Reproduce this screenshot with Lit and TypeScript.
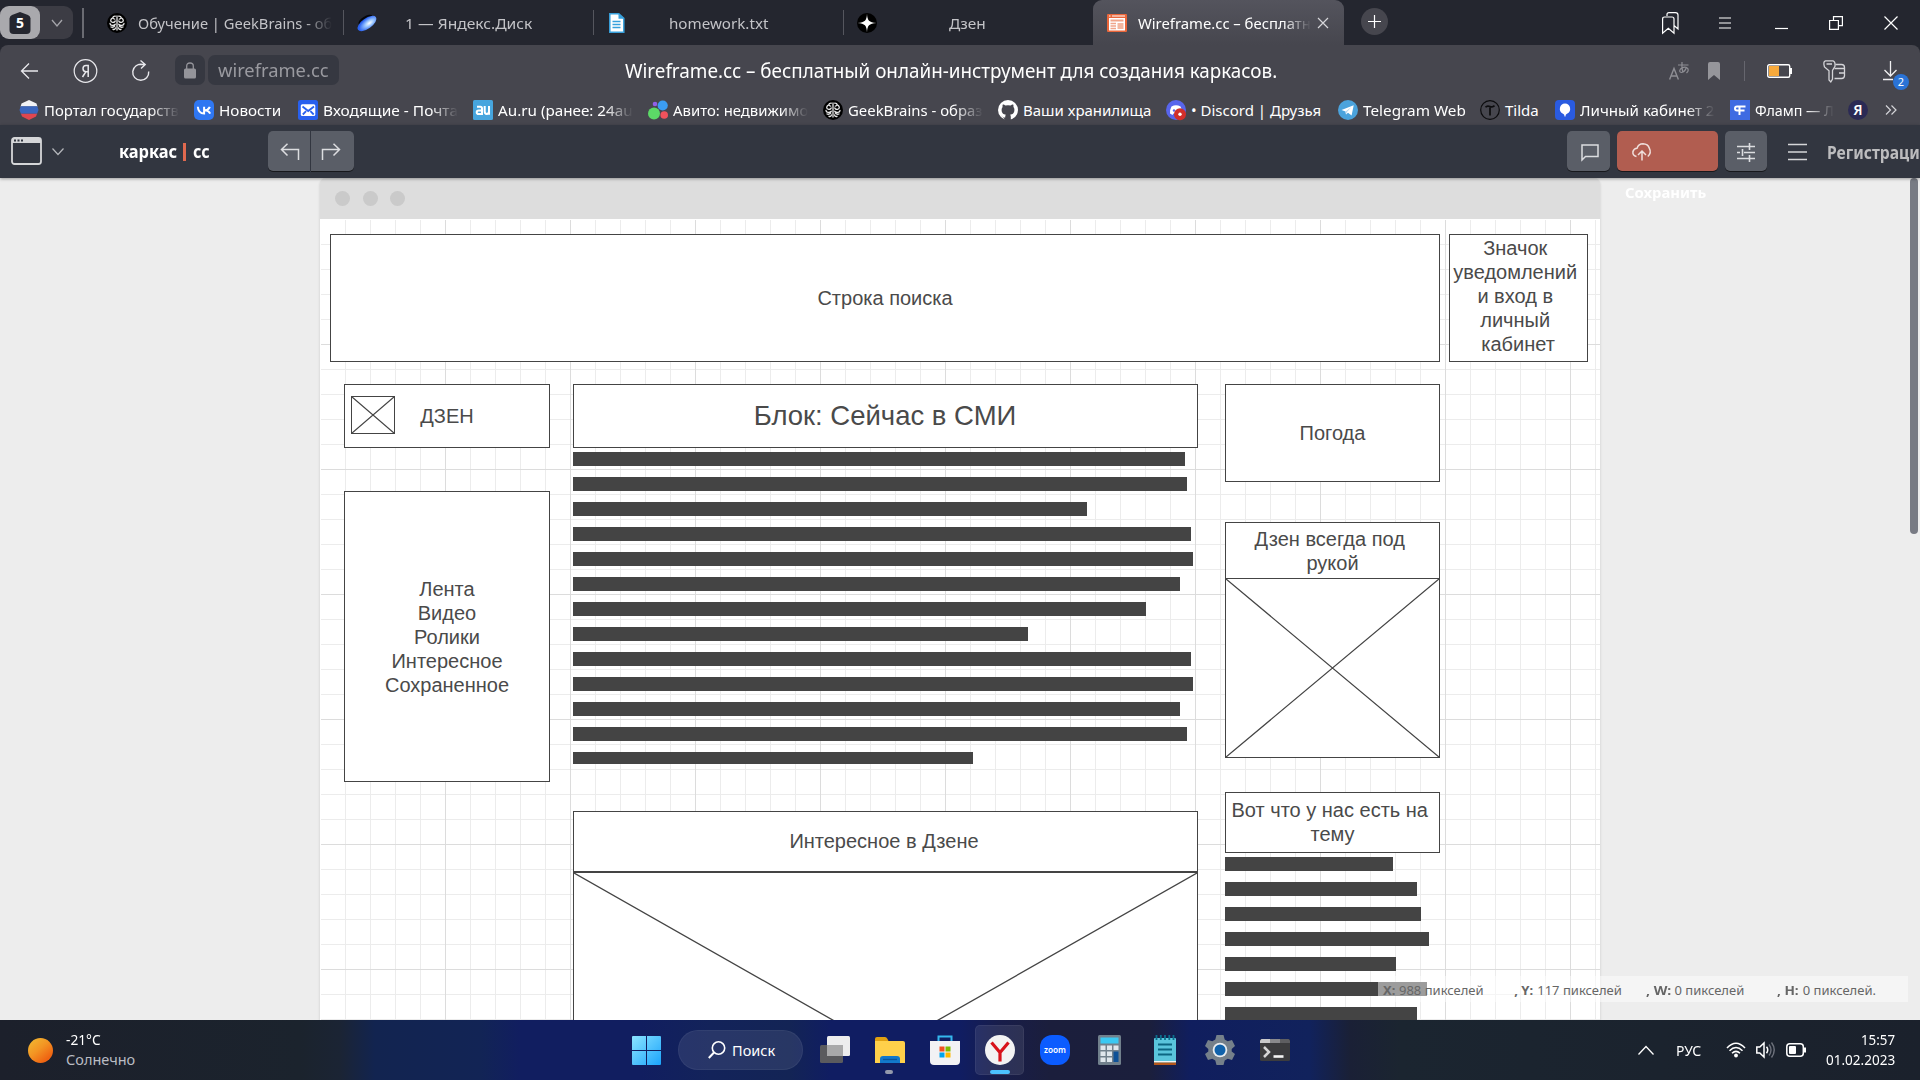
import { LitElement, html, svg, css, TemplateResult } from "lit";
import { customElement, property, query } from "lit/decorators.js";
import { styleMap } from "lit/directives/style-map.js";

/** A single line of text condensed or stretched to an exact width. */
@customElement("fit-text")
class FitText extends LitElement {
  @property() text = "";
  @property({ type: Number }) w = 0;
  @property({ type: Boolean, reflect: true }) fade = false;
  @query(".in") inner!: HTMLElement;
  static styles = css`
    :host { display: block; flex: none; white-space: pre; overflow: visible; }
    :host([fade]) { -webkit-mask-image: linear-gradient(90deg, #000 calc(100% - 28px), transparent); mask-image: linear-gradient(90deg, #000 calc(100% - 28px), transparent); }
    .in { display: inline-block; transform-origin: 0 50%; }
  `;
  render() { return html`<span class="in">${this.text}</span>`; }
  updated() {
    this.style.width = this.w + "px";
    const n = this.inner.offsetWidth;
    if (n) this.inner.style.transform = `scaleX(${this.w / n})`;
  }
}

const fit = (text: string, w: number, fade = false) => html`<fit-text .text=${text} .w=${w} ?fade=${fade}></fit-text>`;
const icon = (w: number, h: number, body: unknown) => html`<svg class="ic" width=${w} height=${h} viewBox="0 0 ${w} ${h}" fill="none">${body}</svg>`;

const brain = svg`<circle cx="10" cy="10" r="10" fill="#000"/><g stroke="#e8e8e8" stroke-width="1.3" stroke-linecap="round"><path d="M10 3v14M8.3 3.2C5 3 5.600 6 7.700 6.200M6 4.600C3 6 3 9 5.500 9.300c2 .2 2.700-.8 2.700-1.500M3 10.500c0 2 3.500 2.500 5.300 .8M4 14c1.500 .6 3-.2 3.800-1M6 16.300c1.300 .6 2.400-.3 2.400-1.500M11.700 3.200C15 3 14.400 6 12.300 6.200M14 4.600c3 1.400 3 4.400 .5 4.700c-2 .2-2.700-.8-2.700-1.500M17 10.500c0 2-3.500 2.500-5.300 .8M16 14c-1.500 .6-3-.2-3.800-1M14 16.300c-1.300 .6-2.400-.3-2.400-1.500"/></g>`;

const I: Record<string, TemplateResult> = {
  brain: icon(20, 20, brain),
  disk: icon(20, 20, svg`<defs><radialGradient id="dg" cx=".6" cy=".6" r=".55"><stop offset="0" stop-color="#fff"/><stop offset=".4" stop-color="#9cc8ff"/><stop offset="1" stop-color="#2a62f0"/></radialGradient></defs><ellipse cx="8.500" cy="7" rx="8" ry="3.600" transform="rotate(-32 8.500 7)" fill="#05060a"/><ellipse cx="10" cy="10.500" rx="11" ry="5.200" transform="rotate(-35 10 10.500)" fill="url(#dg)"/>`),
  doc: icon(20, 20, svg`<path d="M2.800 .8h9l5 4.600v13.800h-14z" fill="#fff" stroke="#37a0dc" stroke-width="1.500"/><path d="M11.500 .8v5h5.300z" fill="#37a0dc"/><path d="M5.500 8.500h8M5.500 11.500h8M5.500 14.500h8" stroke="#37a0dc" stroke-width="1.400"/>`),
  zen: icon(20, 20, svg`<circle cx="10" cy="10" r="10" fill="#000"/><path d="M10 .5C10.300 7.500 12 9.500 19.500 10C12 10.500 10.300 12.500 10 19.500C9.700 12.500 8 10.500 .5 10C8 9.500 9.700 7.500 10 .5z" fill="#fff"/>`),
  wire: icon(20, 20, svg`<rect y="1" width="20" height="18" rx="1" fill="#e9663a"/><path d="M2 3h1.500M5 3h13" stroke="#fff" stroke-width="1"/><rect x="2" y="5" width="16" height="12.500" fill="#fff"/><path d="M3.500 7.500h13" stroke="#f0a58a" stroke-width="2"/><path d="M3.500 10.500h5.500M3.500 13h5.500M3.500 15.500h5.500" stroke="#f0a58a" stroke-width="1.300"/><rect x="10.500" y="10" width="6" height="6" fill="#f3b7a0"/>`),
  flag: icon(20, 20, svg`<defs><clipPath id="fc"><path d="M10 0l7.500 3.600L19.500 10 17 16.500 10 20 3 16.500 .5 10 2.500 3.600z"/></clipPath></defs><g clip-path="url(#fc)"><path d="M0 0h20v6.500H0z" fill="#f2f2f5"/><path d="M0 6.300h20v7.500H0z" fill="#3b66bd"/><path d="M0 13.700h20V20H0z" fill="#e0464f"/></g>`),
  vk: icon(20, 20, svg`<rect width="20" height="20" rx="5" fill="#2f77f2"/><path d="M3.800 6.800c.3 4 2.600 6.700 6.300 6.700V6.800M15.800 6.800c-.7 1.800-2.400 3.300-5.300 3.400c3 .2 4.900 1.400 5.600 3.400" stroke="#fff" stroke-width="2"/>`),
  mail: icon(20, 20, svg`<rect width="20" height="20" rx="2.500" fill="#2860ee"/><rect x="2.800" y="4.300" width="14.500" height="11.700" rx="1.500" fill="#fff"/><path d="M4.500 6.500l5.700 4.500L16 6.500M4.800 14.500l3.300-3.300M15.700 14.500l-3.300-3.300" stroke="#2860ee" stroke-width="1.800"/>`),
  au: icon(20, 20, svg`<rect width="20" height="20" rx="1.500" fill="#46a5de"/><path d="M4 6.700h3.300q1.700 0 1.700 1.700V14H5.700q-2 0-2-1.800t2-1.800H9M11.700 6v5.500q0 2.400 2.100 2.400T16 11.500V6M16 6v8.700" stroke="#fff" stroke-width="2"/>`),
  avito: icon(20, 20, svg`<circle cx="14.700" cy="5.500" r="5.100" fill="#3b9df2"/><circle cx="7" cy="4" r="2.300" fill="#9160e8"/><circle cx="6" cy="13.500" r="6" fill="#5cd967"/><circle cx="16.200" cy="15" r="3.800" fill="#f0525c"/>`),
  github: icon(20, 20, svg`<circle cx="10" cy="10" r="10" fill="#fff"/><path d="M7.200 20v-2.600c-2.600.5-3.300-1.300-3.900-2.200M12.800 20v-3.200c0-1-.3-1.600-.7-2 2.400-.3 4.300-1.400 4.300-5 0-1.200-.4-2-1-2.700.2-.8.200-1.700-.2-2.600-1 0-2 .6-2.700 1.100a9 9 0 0 0-5 0C6.800 5.100 5.800 4.500 4.800 4.500c-.4.900-.4 1.800-.2 2.600-.6.7-1 1.500-1 2.700 0 3.600 1.900 4.700 4.300 5-.4.400-.7 1-.7 2V20z" fill="#46464e"/>`),
  discord: icon(20, 20, svg`<circle cx="10" cy="10" r="10" fill="#5865ec"/><path d="M5.500 6.500Q10 4 14.500 6.500 16.500 10 16 13.500L13.500 15 12.500 13.500H7.500L6.500 15 4 13.500Q3.500 10 5.500 6.500z" fill="#fff"/><circle cx="8" cy="10.500" r="1.200" fill="#5865ec"/><circle cx="14" cy="14.300" r="6" fill="#d12f2b"/><circle cx="14" cy="14.300" r="1.700" fill="#fff"/>`),
  telegram: icon(20, 20, svg`<circle cx="10" cy="10" r="10" fill="#4ba3dc"/><path d="M3.500 10L15.700 5.200 13.600 15.500 10 12.800 8 14.600 7.500 11.500z" fill="#fff"/><path d="M7.500 11.500l6-4.500-4.500 5L8 14.600z" fill="#b9d8ee"/>`),
  tilda: icon(20, 20, svg`<circle cx="10" cy="10" r="9.300" stroke="#0c0c0e" stroke-width="1.200"/><path d="M5.500 7.300c1.500-2 3-1.400 4.500-.8s3 .8 4.500-.8M10 7.500v8" stroke="#0c0c0e" stroke-width="1.700"/>`),
  gis: icon(20, 20, svg`<rect width="20" height="20" rx="4" fill="#2a5be0"/><path d="M10 3.500a5.400 5.400 0 0 0-2 10.300c1.200.5 1.400 1.200 1.500 2.700h1c.1-1.500.3-2.200 1.500-2.700A5.400 5.400 0 0 0 10 3.500z" fill="#fff"/>`),
  flamp: icon(20, 20, svg`<rect width="20" height="20" fill="#3f6be2"/><path d="M9.500 15V6.500H15.500M9.500 10.500h5M10.500 6.500H7a2 2 0 0 0 0 4h2.500" stroke="#fff" stroke-width="2"/>`),
};

const TABS: [string, string, number, number][] = [
  ["brain", "Обучение | GeekBrains - об", 194, 0],
  ["disk", "1 — Яндекс.Диск", 127, 17],
  ["doc", "homework.txt", 99, 31],
  ["zen", "Дзен", 37, 61],
];
const MARKS: [string, string, number, number, boolean][] = [
  ["flag", "Портал государств", 175, 135, true], ["vk", "Новости", 104, 62, false],
  ["mail", "Входящие - Почта", 175, 135, true], ["au", "Au.ru (ранее: 24au", 175, 135, true],
  ["avito", "Авито: недвижимо", 175, 135, true], ["brain", "GeekBrains - образ", 175, 135, true],
  ["github", "Ваши хранилища", 168, 128, false], ["discord", "• Discord | Друзья", 172, 130, false],
  ["telegram", "Telegram Web", 142, 103, false], ["tilda", "Tilda", 75, 34, false],
  ["gis", "Личный кабинет 2", 175, 135, true], ["flamp", "Фламп — Л", 118, 79, true],
];

type Box = { x: number; y: number; w: number; h: number; lines?: string[]; cls?: string; cross?: boolean };
/* Coordinates are relative to the top-left corner of the drawing sheet. */
const BOXES: Box[] = [
  { x: 10, y: 15, w: 1110, h: 128, lines: ["Строка поиска"] },
  { x: 1129, y: 15, w: 139, h: 128, lines: ["Значок ", "уведомлений ", "и вход в ", "личный ", "кабинет"], cls: "high" },
  { x: 24, y: 165, w: 206, h: 64, lines: ["ДЗЕН"] },
  { x: 31, y: 177, w: 44, h: 38, cross: true },
  { x: 24, y: 272, w: 206, h: 291, lines: ["Лента", "Видео", "Ролики", "Интересное", "Сохраненное"] },
  { x: 253, y: 165, w: 625, h: 64, lines: ["Блок: Сейчас в СМИ"], cls: "big" },
  { x: 905, y: 165, w: 215, h: 98, lines: ["Погода"] },
  { x: 905, y: 303, w: 215, h: 57, lines: ["Дзен всегда под ", "рукой"] },
  { x: 905, y: 359, w: 215, h: 180, cross: true },
  { x: 905, y: 573, w: 215, h: 61, lines: ["Вот что у нас есть на ", "тему"], cls: "raised" },
  { x: 253, y: 592, w: 625, h: 61, lines: ["Интересное в Дзене"], cls: "raised left" },
  { x: 253, y: 653, w: 625, h: 356, cross: true },
];
const LONG = [612, 614, 514, 618, 620, 607, 573, 455, 618, 620, 607, 614, 400];
const SHORT = [168, 192, 196, 204, 171, 202, 192];

@customElement("app-root")
class AppRoot extends LitElement {
  static styles = css`
    :host { display: flex; flex-direction: column; width: 1920px; height: 1080px; overflow: hidden; font-family: "Noto Sans", "Open Sans", sans-serif; font-size: 15px; line-height: 20px; color: #fff; background: #ededed; }
    * { box-sizing: border-box; }
    .ic { display: block; flex: none; overflow: visible; }
    .grow { flex: 1; }
    .tabs { display: flex; height: 45px; background: #24262f; flex: none; color: #c3c3c7; }
    .group { display: flex; width: 73px; height: 33px; margin: 6px 9px 0 0; background: #3c3c44; border-radius: 9px; align-items: center; }
    .count { display: flex; width: 40px; height: 33px; background: #a9a9ad; border-radius: 9px; align-items: center; justify-content: center; margin-right: 11px; }
    .div { width: 2px; height: 30px; margin: 8px 9px 0 0; background: #6a6b72; }
    .tab { display: flex; width: 250px; height: 45px; padding: 1px 0 0 14px; align-items: center; position: relative; gap: 11px; }
    .tab + .tab::before { content: ""; position: absolute; left: 0; top: 10px; height: 25px; width: 1px; background: #55565e; }
    .tab.on { width: 251px; background: linear-gradient(#54545d, #46464e); color: #fff; border-radius: 9px 9px 0 0; gap: 11px; }
    .tab.on::before { display: none; }
    .x { margin-left: -5px; }
    .off { display: flex; }
    .cell { display: flex; width: 26px; justify-content: center; }
    .first { margin-left: 3px; }
    .res { padding-right: 2px; justify-content: flex-start; padding-left: 4px; }
    .last { width: 20px; }
    .plus { width: 27px; height: 27px; border-radius: 50%; background: #46464e; margin: 8px 0 0 17px; display: grid; place-items: center; }
    .wins { display: flex; padding: 0 19.500px 0 0; gap: 30px; height: 46px; align-items: center; }
    .bar { background: #24262f; flex: none; }
    .barin { background: #46464e; border-radius: 8px 8px 0 0; height: 80px; }
    .addr { display: flex; height: 52px; align-items: center; padding-left: 20px; }
    .lock { width: 30px; height: 30px; background: #363841; border-radius: 7px; display: grid; place-items: center; margin: -2px 3px 0 25px; }
    .url { width: 131px; height: 30px; margin-top: -2px; background: #363841; border-radius: 7px; color: #9a9aa0; font-size: 18px; display: flex; align-items: center; padding-left: 10px; margin-right: 286px; }
    .title { font-size: 19px; line-height: 26px; }
    .tools { display: flex; align-items: center; margin-left: 392px; }
    .vr { width: 1px; height: 20px; background: #66666e; margin: 0 22px 0 24px; }
    .badge { position: relative; }
    .num { position: absolute; left: 10px; top: 13px; width: 16px; height: 16px; border-radius: 50%; background: #2a73d6; font-size: 11px; line-height: 16px; text-align: center; }
    .marks { display: flex; height: 26px; align-items: center; padding-left: 19px; }
    .mark { display: flex; align-items: center; gap: 5px; }
    .mark fit-text { margin-top: -1px; }
    .ya { width: 20px; height: 20px; border-radius: 50%; background: #2b2a55; font-weight: 600; font-size: 14px; line-height: 20px; text-align: center; margin-right: 17px; }
    .app { display: flex; height: 53px; background: #323640; flex: none; align-items: flex-start; position: relative; z-index: 3; box-shadow: 0 1px 3px rgba(0,0,0,.35); padding: 6px 0 0 11px; }
    .logo { display: flex; align-items: center; font-weight: 700; font-size: 17px; height: 40px; margin-left: 55px; padding-top: 2px; }
    .logo i { width: 3px; height: 18px; background: #e0694f; margin: 0 7px 0 6px; }
    .btn { display: grid; place-items: center; width: 42px; height: 40px; background: #5a5e67; border-radius: 5px; box-shadow: 0 1px 0 #17181c; padding-top: 2px; }
    .undo { border-radius: 5px 0 0 5px; margin: 0 1px 0 58px; padding-left: 2px; }
    .redo { border-radius: 0 5px 5px 0; width: 43px; padding-right: 3px; }
    .talk { width: 43px; padding-left: 2px; }
    .save { width: 101px; background: #b15d50; margin: 0 7px; place-items: center start; padding-left: 15px; position: relative; }
    .cap { position: absolute; left: 8px; top: 51px; font-weight: 700; font-size: 15px; color: #fff; }
    .reg { color: #bcbcbe; font-weight: 700; font-size: 17.500px; margin: 11px 0 0 20px; width: 93px; }
    .mid { height: 40px; display: flex; align-items: center; }
    .menu { margin-left: 21px; padding-top: 1px; }
    .stage { height: 842px; flex: none; position: relative; overflow: hidden; padding-left: 320px; }
    .page { width: 1280px; box-shadow: 0 0 2px 1px rgba(0,0,0,.08); border-radius: 8px 8px 0 0; }
    .chrome { height: 41px; background: #ddd; border-radius: 6px 6px 0 0; display: flex; align-items: center; gap: 12.500px; padding-left: 15px; }
    .chrome i { width: 15px; height: 15px; border-radius: 50%; background: #cacaca; }
    .sheet { position: relative; height: 830px; background: #fff; }
    .grid { position: absolute; inset: 1px 0 0 1px;
      background-image: linear-gradient(90deg, transparent 124px, #dcdcdc 124px), linear-gradient(transparent 124px, #dcdcdc 124px), linear-gradient(90deg, transparent 24px, #ececec 24px), linear-gradient(transparent 24px, #ececec 24px);
      background-size: 125px 125px, 125px 125px, 25px 25px, 25px 25px; }
    .box { position: absolute; border: 1px solid #444; background: #fff; display: flex; flex-direction: column; align-items: center; justify-content: center; font: 20px/24px "Liberation Sans", Arial, sans-serif; color: #4a4a4a; white-space: pre; }
    .raised { padding-bottom: 2px; }
    .high { padding: 0 1px 4px 0; }
    .left { padding-right: 3px; }
    .big { font-size: 27.500px; padding-right: 1px; }
    .box svg { position: absolute; inset: 0; width: 100%; height: 100%; }
    .lines { position: absolute; display: flex; flex-direction: column; gap: 11px; }
    .lines i { height: 14px; background: #444; }
    .l1 { left: 253px; top: 233px; }
    .l1 i:last-child { height: 12px; }
    .l2 { left: 905px; top: 638px; }
    .status { position: absolute; left: 1378px; top: 798px; width: 530px; height: 26px; background: rgba(255,255,255,.47); color: #666; font-size: 13px; display: flex; align-items: center; padding: 1px 0 0 5px; }
    .status span { display: flex; gap: 4px; width: 133px; }
    .status b { font-weight: 700; }
    .thumb { position: absolute; left: 1910px; top: 0; width: 8px; height: 356px; border-radius: 4px; background: #787b84; }
    .task { height: 60px; flex: none; display: flex; align-items: center; font-size: 14.500px; background: linear-gradient(90deg, #1c202b 0, #1b232d 300px, #1b2434 340px, #122450 375px, #122455 480px, #111e60 520px, #111e60 640px, #13235a 710px, #132455 790px, #101d62 830px, #101d62 960px, #181d4a 1000px, #1b1e3c 1050px, #1b1f3c 1150px, #101e5e 1190px, #11225c 1310px, #1a2036 1350px, #1b2530 1400px, #1b212c 1920px); }
    .sun { width: 25px; height: 25px; border-radius: 50%; background: linear-gradient(140deg, #f0bd33, #f39423 45%, #ef6412 80%); margin: 0 13px 0 28px; }
    .col { display: flex; flex-direction: column; margin-top: -2px; }
    .dim { color: #b9bcc3; }
    .gap1 { width: 497px; }
    .gap2 { width: 25px; }
    .pill { display: flex; width: 125px; height: 40px; border-radius: 20px; background: rgba(255,255,255,.09); border: 1px solid rgba(255,255,255,.05); align-items: center; gap: 6px; padding-left: 29px; margin: 0 4px 0 17px; }
    .app-i { width: 49px; height: 50px; margin: 0 3px; display: grid; place-items: center; border-radius: 5px; position: relative; }
    .cur { background: rgba(255,255,255,.09); border: 1px solid rgba(255,255,255,.06); }
    .dot { position: absolute; bottom: 1px; left: 20px; width: 8px; height: 4px; border-radius: 2px; background: #9399ac; }
    .cur .dot { left: 14px; width: 20px; background: #4cc2ff; bottom: 0; }
    .clock { align-items: flex-end; margin: -2px 25px 0 20px; }
  `;

  box(b: Box) {
    return html`<div class="box ${b.cls ?? ""}" style=${styleMap({ left: b.x + "px", top: b.y + "px", width: b.w + "px", height: b.h + "px" })}>
      ${b.cross ? html`<svg preserveAspectRatio="none" viewBox="0 0 100 100"><path d="M0 0L100 100M100 0L0 100" stroke="#444" stroke-width="1.300" vector-effect="non-scaling-stroke"/></svg>` : (b.lines ?? []).map(l => html`<span>${l}</span>`)}
    </div>`;
  }

  render() {
    return html`
      <div class="tabs">
        <div class="group"><div class="count">${icon(22, 22, svg`<path d="M11 0l8 3q2.500 1 2.500 3.500V18q0 4-4 4h-13q-4 0-4-4V6.500Q.5 4 3 3z" fill="#24262f"/><text x="11" y="16" font-size="14" font-weight="700" text-anchor="middle" fill="#fff">5</text>`)}</div>${icon(12, 8, svg`<path d="M1 1l5 6 5-6" stroke="#a5a5aa" stroke-width="1.300"/>`)}</div>
        <div class="div"></div>
        ${TABS.map(([i, t, w, off], n) => html`<div class="tab">${I[i]}<span class="off" style=${styleMap({ marginLeft: off + "px" })}>${fit(t, w, n === 0)}</span></div>`)}
        <div class="tab on">${I.wire}${fit("Wireframe.cc – бесплатн", 173, true)}<span class="x">${icon(12, 12, svg`<path d="M1 1l10 10M11 1L1 11" stroke="#d6d6da" stroke-width="1.200"/>`)}</span></div>
        <div class="plus">${icon(13, 13, svg`<path d="M6.500 0v13M0 6.500h13" stroke="#fff" stroke-width="1.200"/>`)}</div>
        <div class="grow"></div>
        <div class="wins">
          ${icon(18, 22, svg`<path d="M5 4V2.500Q5 .6 7 .6h6.500q2.500 0 2.500 2.500V17l-4-3.500M.6 7q0-2 2-2H10q2 0 2 2v14.200l-5.700-5-5.700 5z" stroke="#fff" stroke-width="1.200"/>`)}
          <span class="cell first">${icon(14, 12, svg`<path d="M0 1h12M0 6h12M0 11h12" stroke="#fff" stroke-width="1.200"/>`)}</span>
          <span class="cell">${icon(13, 12, svg`<path d="M0 11.500h13" stroke="#fff" stroke-width="1.200"/>`)}</span>
          <span class="cell res">${icon(14, 14, svg`<path d="M.6 4.500h8.800v8.800H.6zM4.500 4.500V.6h8.900v9H9.500" stroke="#fff" stroke-width="1.200"/>`)}</span>
          <span class="cell last">${icon(14, 14, svg`<path d="M.5 .5l13 13M13.500 .5l-13 13" stroke="#fff" stroke-width="1.200"/>`)}</span>
        </div>
      </div>
      <div class="bar"><div class="barin">
        <div class="addr">
          ${icon(53, 18, svg`<path d="M18 9H1.500M9 1.500L1.500 9 9 16.500" stroke="#e8e8ec" stroke-width="1.300"/>`)}
          ${icon(58, 24, svg`<circle cx="12.500" cy="12" r="11.300" stroke="#e8e8ec" stroke-width="1.200"/><path d="M15.200 18V6.500h-2.200q-3 0-3 3.100t3 3.100h2M12.800 12.800L9.500 18" stroke="#e8e8ec" stroke-width="1.500"/>`)}
          ${icon(19, 22, svg`<path d="M11.500 4.500A8 8 0 1 0 17.700 11.500M7.500 4.500h6.500M9.500 .5l4.700 4-4.200 4" stroke="#e8e8ec" stroke-width="1.400"/>`)}
          <div class="lock">${icon(12, 17, svg`<rect y="6.500" width="12" height="10" rx="1.500" fill="#94949a"/><path d="M2.700 7V4q0-3 3.300-3t3.300 3v3" stroke="#94949a" stroke-width="1.300"/>`)}</div>
          <div class="url">${fit("wireframe.cc", 110)}</div>
          <div class="title">${fit("Wireframe.cc – бесплатный онлайн-инструмент для создания каркасов.", 652)}</div>
          <div class="tools">
            ${icon(39, 20, svg`<path d="M.6 18.500L5 7.500l4.400 11M2.200 15h5.600" stroke="#8e8e94" stroke-width="1.400"/><path d="M9 4h10.500M13 1q-.5 6 .8 10M17.500 6q-1.500 5-5 5.500-3-.6-1-3.500 3-2.500 6-1.500 3.500 2 0 5.500" stroke="#8e8e94" stroke-width="1.200"/>`)}
            ${icon(12, 18, svg`<path d="M0 18V2q0-2 2-2h8q2 0 2 2v16l-6-5z" fill="#96969b"/>`)}
            <div class="vr"></div>
            ${icon(56, 14, svg`<rect x=".7" y=".7" width="22" height="12.600" rx="1.500" stroke="#fff" stroke-width="1.400"/><rect x="2" y="2" width="10" height="10" fill="#f7a93b"/><path d="M24 4v6" stroke="#fff" stroke-width="2"/>`)}
            ${icon(60, 23, svg`<path d="M2.500 .8h7.500q2.500 .8 2 5.500L9.500 10.500V19l-1.700 3L6 20V10.800L1.500 7Q-.2 1.500 2.500 .8zM3.500 4H9" stroke="#d4d4d8" stroke-width="1.300"/><path d="M12.500 4.500h6q3 0 3 3v8q0 3-3 3H11.500M11.500 8.500h10M16 13h5.500" stroke="#d4d4d8" stroke-width="1.300"/>`)}
            <div class="badge">${icon(14, 20, svg`<path d="M7.500 0v15M1.500 9L7.500 15l6-6M0 18.500h10" stroke="#f0f0f2" stroke-width="1.300"/>`)}<span class="num">2</span></div>
          </div>
        </div>
        <div class="marks">
          ${MARKS.map(([i, t, cell, w, f]) => html`<div class="mark" style=${styleMap({ width: cell + "px" })}>${I[i]}${fit(t, w, f)}</div>`)}
          <div class="ya">Я</div>
          ${icon(12, 10, svg`<path d="M1 .5L5.500 5 1 9.500M6.500 .5L11 5l-4.500 4.500" stroke="#d4d4d8" stroke-width="1.200"/>`)}
        </div>
      </div></div>
      <div class="app">
        <div class="mid">${icon(41, 28, svg`<rect x="1" y="1" width="29" height="26" rx="2.500" stroke="#d5d6d8" stroke-width="1.800"/><path d="M1 1h29v5H1z" fill="#d5d6d8"/><path d="M3 3.500h2M6.500 3.500h2M10 3.500h2" stroke="#323640" stroke-width="2"/>`)}
        ${icon(12, 8, svg`<path d="M.5 1.500L6 7.500l5.500-6" stroke="#b5b7bb" stroke-width="1.200"/>`)}</div>
        <div class="logo">${fit("каркас", 58)}<i></i>${fit("cc", 17)}</div>
        <div class="btn undo">${icon(20, 18, svg`<path d="M18.500 17V6.500H1.500M7.500 .7L1.500 6.500l6 6" stroke="#dcdde0" stroke-width="1.500"/>`)}</div>
        <div class="btn redo">${icon(20, 18, svg`<path d="M1.500 17V6.500h17M12.500 .7l6 5.800-6 6" stroke="#dcdde0" stroke-width="1.500"/>`)}</div>
        <div class="grow"></div>
        <div class="btn talk">${icon(18, 17, svg`<path d="M1 16V1h16v11.500H4.500z" stroke="#dcdde0" stroke-width="1.500"/>`)}</div>
        <div class="btn save">${icon(20, 18, svg`<path d="M4.500 13.500q-4-1-3.600-4.700Q1.700 5.500 5 5.300 6.500 .8 11 .8q5 .2 6.300 4.400 2.500 4.800-1.500 8.300M10 17.500V8M6 12l4-4 4 4" stroke="#f0e0dc" stroke-width="1.500"/>`)}<span class="cap">${fit("Сохранить", 81)}</span></div>
        <div class="btn">${icon(18, 19, svg`<path d="M0 3.500h18M0 9.500h3M7 9.500h11M0 15.500h18M12.500 0v7M5.500 6v7M12.500 12v7" stroke="#dcdde0" stroke-width="1.600"/>`)}</div>
        <div class="mid menu">${icon(19, 18, svg`<path d="M0 1.500h19M0 9h19M0 16.500h19" stroke="#d5d6d8" stroke-width="1.700"/>`)}</div>
        <div class="reg">${fit("Регистраци", 93)}</div>
      </div>
      <div class="stage">
        <div class="page">
          <div class="chrome"><i></i><i></i><i></i></div>
          <div class="sheet">
            <div class="grid"></div>
            ${BOXES.map(b => this.box(b))}
            <div class="lines l1">${LONG.map(w => html`<i style=${styleMap({ width: w + "px" })}></i>`)}</div>
            <div class="lines l2">${SHORT.map(w => html`<i style=${styleMap({ width: w + "px" })}></i>`)}</div>
          </div>
        </div>
        <div class="status">
          <span><b>${fit("X:", 12)}</b>${fit("988 пикселей", 85)}</span>
          <span><b>${fit(", Y:", 19)}</b>${fit("117 пикселей", 85)}</span>
          <span><b>${fit(", W:", 25)}</b>${fit("0 пикселей", 70)}</span>
          <span><b>${fit(", H:", 22)}</b>${fit("0 пикселей.", 73)}</span>
        </div>
        <div class="thumb"></div>
      </div>
      <div class="task">
        <div class="sun"></div>
        <div class="col">${fit("-21°C", 35)}<span class="dim">${fit("Солнечно", 69)}</span></div>
        <span class="gap1"></span>
        ${icon(29, 29, svg`<defs><linearGradient id="wg" x2="1" y2="1" gradientUnits="objectBoundingBox"><stop stop-color="#8be4ff"/><stop offset="1" stop-color="#1ba4fb"/></linearGradient></defs><path d="M0 1q0-1 1-1h13v14H0zM15 0h13q1 0 1 1v13H15zM0 15h14v14H1q-1 0-1-1zM15 15h14v13q0 1-1 1H15z" fill="url(#wg)"/>`)}
        <div class="pill">${icon(18, 18, svg`<circle cx="10.500" cy="7" r="6.200" stroke="#fff" stroke-width="1.600"/><path d="M6 11.500L.8 17" stroke="#fff" stroke-width="2"/>`)}${fit("Поиск", 43)}</div>
        <div class="app-i">${icon(30, 28, svg`<rect y="9" width="23" height="18" rx="1.500" fill="#5b5b5e"/><rect x="7" y="0" width="23" height="20" rx="1.500" fill="#ededee"/><path d="M7 9h16v11H8q-1 0-1-1z" fill="#a9a9aa"/>`)}</div>
        <div class="app-i">${icon(30, 26, svg`<path d="M0 2q0-2 2-2h8q1.500 0 2.500 2l1 2H0z" fill="#e0a011"/><path d="M0 4h28q2 0 2 2v20H0z" fill="#ffd04a"/><path d="M5 26v-4q0-3 3-3h14q3 0 3 3v4z" fill="#1278cc"/><path d="M8 22.500h14" stroke="#0a559c" stroke-width="1.300"/>`)}<i class="dot"></i></div>
        <div class="app-i">${icon(30, 30, svg`<path d="M8.500 6V1.500h13V6" stroke="#34b7ee" stroke-width="2"/><path d="M0 6h30v20q0 4-4 4H4q-4 0-4-4z" fill="#f2f2f4"/><path d="M9.500 11.500h5v5h-5z" fill="#f25022"/><path d="M15.500 11.500h5v5h-5z" fill="#7fba00"/><path d="M9.500 17.500h5v5h-5z" fill="#00a4ef"/><path d="M15.500 17.500h5v5h-5z" fill="#ffb900"/>`)}</div>
        <div class="app-i cur">${icon(30, 30, svg`<circle cx="15" cy="15" r="15" fill="#f3f3f3"/><path d="M6.500 7.500L15 17.500 23.500 7.500M15 16v10.500" stroke="#d8131b" stroke-width="3.200"/>`)}<i class="dot"></i></div>
        <div class="app-i">${icon(30, 30, svg`<rect width="30" height="30" rx="12" fill="#0b5cff"/><text x="15" y="17.500" font-size="9.500" font-weight="600" text-anchor="middle" textLength="22" lengthAdjust="spacingAndGlyphs" fill="#fff">zoom</text>`)}</div>
        <div class="app-i">${icon(23, 30, svg`<rect width="23" height="30" rx="1.500" fill="#71808c"/><path d="M2.500 2.500h18v6h-18z" fill="#3ac8f2"/><path d="M2.500 10.500h5v4.500h-5zM9 10.500h5v4.500H9zM15.500 10.500h5v4.500h-5zM2.500 16.500h5V21h-5zM9 16.500h5V21H9zM2.500 22.500h5V27h-5zM9 22.500h5V27H9z" fill="#dfe6ec"/><path d="M15.500 16.500h5V27h-5z" fill="#0f5197"/>`)}</div>
        <div class="app-i">${icon(22, 30, svg`<rect y="3" width="22" height="27" rx="1" fill="#5ac5dc"/><path d="M0 26h22v1.500H0z" fill="#f3f3f3"/><path d="M0 27.500h22v2.500H0z" fill="#b4571b"/><path d="M2.500 0v5M6.800 0v5M11 0v5M15.300 0v5M19.500 0v5" stroke="#0a6f8d" stroke-width="1.800"/><path d="M4 9.500h14M4 14.500h14M4 19.500h14" stroke="#0c6682" stroke-width="2"/>`)}</div>
        <div class="app-i">${icon(30, 30, svg`<path d="M11.500 0h7l1.200 4.500 3 1.700L27 5l3 6-3.300 3v2.500L30 19l-3 6-4.300-1.200-3 1.700L18.500 30h-7l-1.200-4.500-3-1.700L3 25l-3-6 3.300-2.500V14L0 11l3-6 4.300 1.200 3-1.700z" fill="#75808a"/><circle cx="15" cy="15" r="7.300" fill="#e9edf0"/><circle cx="15" cy="15" r="5.500" fill="#1062ab"/>`)}</div>
        <div class="app-i">${icon(30, 22, svg`<rect width="30" height="22" rx="1.500" fill="#3c3c3e"/><path d="M1.500 0H10v4H0V1.500z" fill="#c9c9cb"/><path d="M10 0h10v4H10z" fill="#89898c"/><path d="M20 0h8.500L30 1.500V4H20z" fill="#5e5e61"/><path d="M4 8l5 5-5 5" stroke="#d5d5d6" stroke-width="2.500"/><path d="M13.500 17.500h10" stroke="#f5f5f5" stroke-width="2.600"/>`)}</div>
        <div class="grow"></div>
        ${icon(38, 9, svg`<path d="M.5 8.500l7.500-8 7.500 8" stroke="#fff" stroke-width="1.300"/>`)}
        ${fit("РУС", 25)}
        <span class="gap2"></span>
        ${icon(30, 16, svg`<path d="M1 6q9-9.500 18 0M3.500 8.800q6.500-6.500 13 0M6 11.300q4-3.800 8 0" stroke="#fff" stroke-width="1.500"/><circle cx="10" cy="13.500" r="1.900" fill="#fff"/>`)}
        ${icon(30, 16, svg`<path d="M.8 5h3L8 1v14l-4.200-4h-3zM10.500 4.800q2.500 3.200 0 6.400" stroke="#fff" stroke-width="1.500"/><path d="M13 2.500q4 5.500 0 11M15.500 .5q5.500 7.500 0 15" stroke="#6d717b" stroke-width="1.400"/>`)}
        ${icon(20, 14, svg`<rect x=".8" y=".8" width="16.500" height="12.400" rx="3" stroke="#fff" stroke-width="1.500"/><rect x="3" y="3" width="7" height="8" rx="1" fill="#fff"/><path d="M19 4.500v5" stroke="#fff" stroke-width="2"/>`)}
        <div class="col clock">${fit("15:57", 34)}${fit("01.02.2023", 69)}</div>
      </div>`;
  }
}
